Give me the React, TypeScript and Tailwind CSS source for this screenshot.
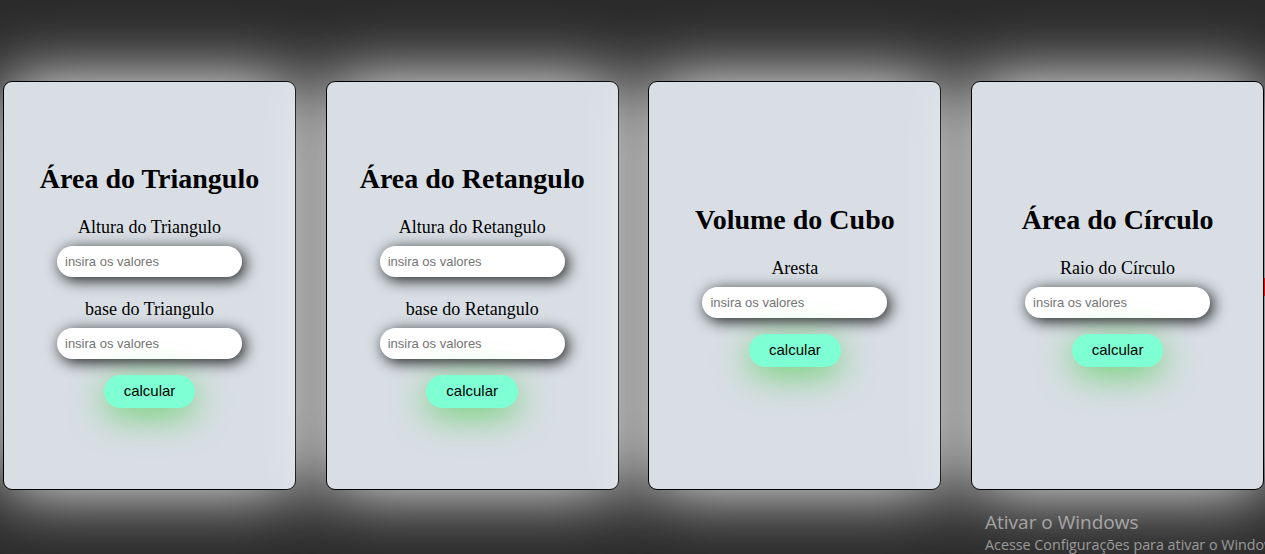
import React from "react";

type Calc = { title: string; labels: string[] };

const calcs: Calc[] = [
  { title: "Área do Triangulo", labels: ["Altura do Triangulo", "base do Triangulo"] },
  { title: "Área do Retangulo", labels: ["Altura do Retangulo", "base do Retangulo"] },
  { title: "Volume do Cubo", labels: ["Aresta"] },
  { title: "Área do Círculo", labels: ["Raio do Círculo"] },
];

function Card({ c }: { c: Calc }) {
  return (
    <div className="w-[293px] h-[409px] shrink-0 rounded-[9px] border border-black bg-[#d8dee4] shadow-[0_0_70px_rgba(255,255,255,1)] flex flex-col items-center justify-center">
      <h1 className="font-['Liberation_Serif',serif] font-bold text-[28px] leading-[32px] text-black">
        {c.title}
      </h1>
      {c.labels.map((l, i) => (
        <div key={i} className="flex flex-col items-center">
          <p className="mt-[22px] font-['Liberation_Serif',serif] text-[18px] leading-[21px] text-black">
            {l}
          </p>
          <input
            placeholder="insira os valores"
            className="mt-[8px] w-[185px] h-[31px] rounded-full bg-white px-[8px] font-['Liberation_Sans',Arial,sans-serif] text-[13px] text-black placeholder:text-[#757575] outline-none shadow-[3px_3px_15px_rgba(0,0,0,0.9)]"
          />
        </div>
      ))}
      <button className="mt-[16px] h-[33px] px-[20px] rounded-full bg-[#7fffd4] font-['Liberation_Sans',Arial,sans-serif] text-[15px] text-black shadow-[0_8px_35px_rgba(40,200,40,0.6)]">
        calcular
      </button>
    </div>
  );
}

export default function App() {
  return (
    <div className="relative h-screen w-full overflow-hidden bg-[#2b2b2b]">
      <div className="flex gap-[29.7px] pl-[3px] pt-[81px]">
        {calcs.map((c, i) => (
          <Card key={i} c={c} />
        ))}
      </div>
      <div className="absolute left-[1264px] top-[278px] w-[4px] h-[18px] bg-[#ff0000]" />
      <div className="absolute left-[985px] top-[509px] whitespace-nowrap font-['Open_Sans','Noto_Sans',sans-serif] text-[rgba(255,255,255,0.5)]">
        <div className="text-[19px] leading-[26px]">Ativar o Windows</div>
        <div className="text-[14.3px] leading-[19px]">Acesse Configurações para ativar o Windows.</div>
      </div>
    </div>
  );
}
